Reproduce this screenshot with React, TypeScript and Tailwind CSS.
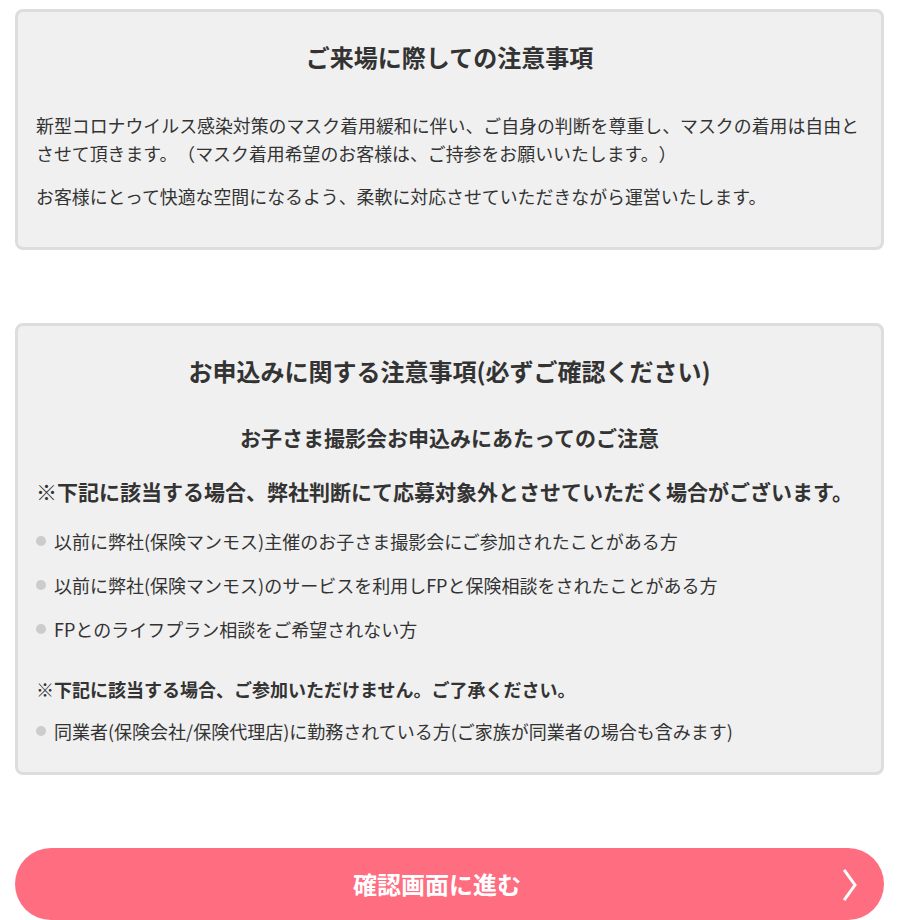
const font = { fontFamily: '"Noto Sans CJK JP", "Noto Sans", sans-serif' };

const targets = [
  "以前に弊社(保険マンモス)主催のお子さま撮影会にご参加されたことがある方",
  "以前に弊社(保険マンモス)のサービスを利用しFPと保険相談をされたことがある方",
  "FPとのライフプラン相談をご希望されない方",
];

function Bullet({ children }: { children: React.ReactNode }) {
  return (
    <li className="flex items-center text-[18px] leading-[28px] text-[#333]">
      <span className="mr-[8px] h-[10px] w-[10px] shrink-0 rounded-full bg-[#cccccc]"></span>
      <span>{children}</span>
    </li>
  );
}

export default function App() {
  return (
    <div className="min-h-[920px] bg-white px-[15px] pt-[9px] [text-spacing-trim:space-all]" style={font}>
      {/* ご来場 */}
      <section className="rounded-[8px] border-[3px] border-[#dddddd] bg-[#f0f0f0] px-[18px] pt-[27px] pb-[37px]">
        <h2 className="text-center text-[24px] font-bold leading-[36px] text-[#333]">ご来場に際しての注意事項</h2>
        <p className="mt-[36px] text-[17.9px] leading-[28px] text-[#333]">
          新型コロナウイルス感染対策のマスク着用緩和に伴い、ご自身の判断を尊重し、マスクの着用は自由とさせて頂きます。（マスク着用希望のお客様は、ご持参をお願いいたします。）
        </p>
        <p className="mt-[15px] text-[17.9px] leading-[28px] text-[#333]">
          お客様にとって快適な空間になるよう、柔軟に対応させていただきながら運営いたします。
        </p>
      </section>

      {/* お申込み */}
      <section className="mt-[73px] rounded-[8px] border-[3px] border-[#dddddd] bg-[#f0f0f0] px-[18px] pt-[27px] pb-[27px]">
        <h2 className="text-center text-[24px] font-bold leading-[36px] text-[#333]">
          お申込みに関する注意事項(必ずご確認ください)
        </h2>
        <h3 className="mt-[32px] text-center text-[21px] font-bold leading-[32px] text-[#333]">
          お子さま撮影会お申込みにあたってのご注意
        </h3>
        <p className="mt-[22px] text-[21px] font-bold leading-[32px] text-[#333]">
          ※下記に該当する場合、弊社判断にて応募対象外とさせていただく場合がございます。
        </p>
        <ul className="mt-[20px] flex flex-col gap-[16px]">
          {targets.map((t) => (
            <Bullet key={t}>{t}</Bullet>
          ))}
        </ul>
        <p className="mt-[32px] text-[18px] font-bold leading-[28px] text-[#333]">
          ※下記に該当する場合、ご参加いただけません。ご了承ください。
        </p>
        <ul className="mt-[14px]">
          <Bullet>同業者(保険会社/保険代理店)に勤務されている方(ご家族が同業者の場合も含みます)</Bullet>
        </ul>
      </section>

      <button className="relative mt-[73px] flex h-[72px] w-full items-center justify-center rounded-full bg-[#ff6d80] pr-[25px] text-[24px] font-bold text-white">
        確認画面に進む
        <svg
          className="absolute right-[26px] top-[20px]"
          width="16"
          height="34"
          viewBox="0 0 16 34"
          fill="none"
          stroke="white"
          strokeWidth="3"
          strokeLinecap="square"
        >
          <path d="M3 3 L13 17 L3 31" />
        </svg>
      </button>
    </div>
  );
}
